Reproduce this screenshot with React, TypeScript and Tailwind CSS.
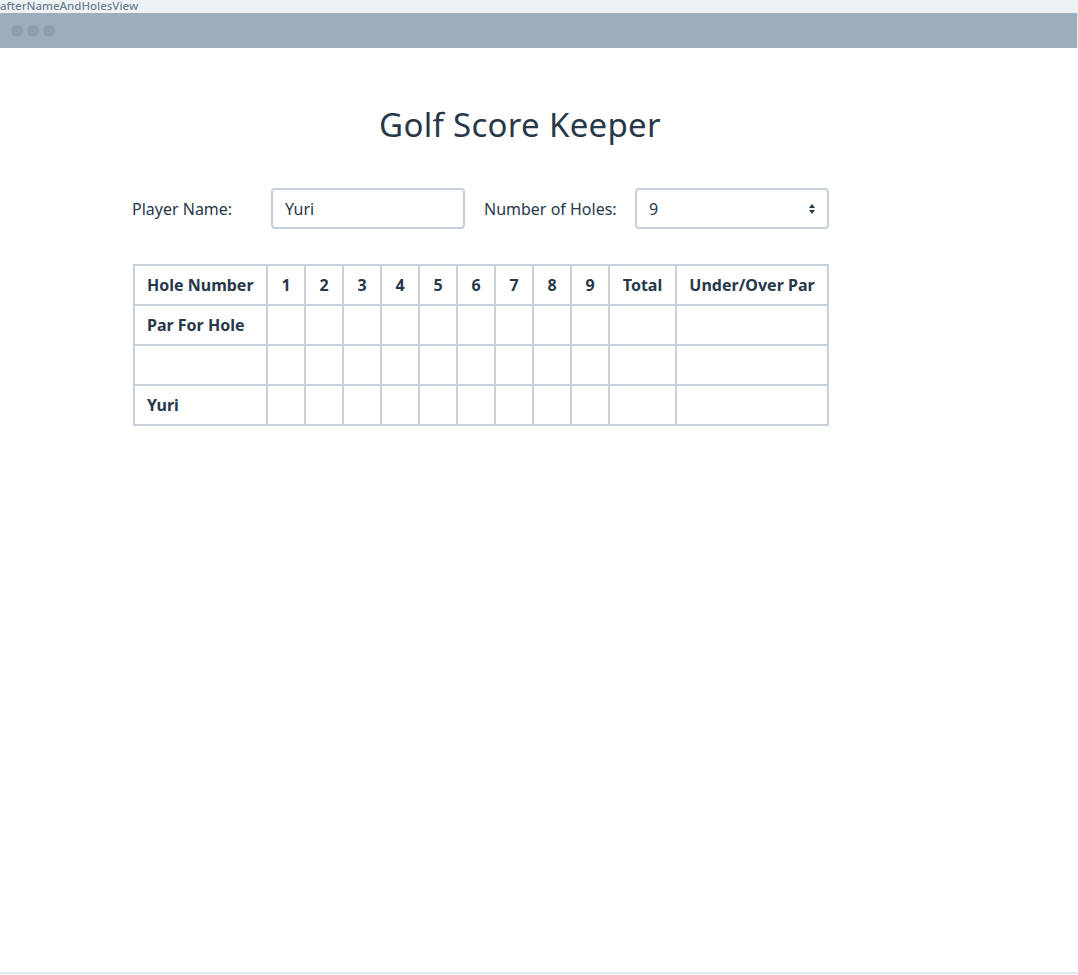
import React from "react";

const holes = [1, 2, 3, 4, 5, 6, 7, 8, 9];

export default function App() {
  const cell = "border-2 border-[#c6d1db] h-[40px] p-0";
  return (
    <div className="w-[1078px] h-[975px] bg-white text-[#27384a] font-['Noto_Sans',sans-serif] flex flex-col overflow-hidden">
      <div className="h-[13px] bg-[#eef2f5] text-[11.5px] leading-[12px] font-medium text-[#6f8092] whitespace-nowrap">
        afterNameAndHolesView
      </div>
      <div className="h-[35px] bg-[#9eadba] flex items-center gap-[4px] pl-[11px] border-r border-[#dfe6ec]">
        <span className="w-[12px] h-[12px] rounded-full bg-[#8e9eac]" />
        <span className="w-[12px] h-[12px] rounded-full bg-[#8e9eac]" />
        <span className="w-[12px] h-[12px] rounded-full bg-[#8e9eac]" />
      </div>
      <div className="flex-1 border-b-2 border-[#e2e8ee] mb-[1px]">
        <div className="w-[1040px] pt-[55px]">
          <h1 className="text-center text-[33px] leading-[44px] font-normal tracking-[0.3px]">
            Golf Score Keeper
          </h1>
        </div>
        <div className="pl-[132px] pt-[41px]">
          <div className="flex items-center text-[16px]">
            <label className="w-[139px]">Player Name:</label>
            <div className="w-[194px] h-[41px] border-2 border-[#c6d1db] rounded-[4px] flex items-center pl-[12px]">
              Yuri
            </div>
            <label className="ml-[19px] w-[151px]">Number of Holes:</label>
            <div className="w-[194px] h-[41px] border-2 border-[#c6d1db] rounded-[4px] flex items-center justify-between pl-[12px] pr-[11px]">
              <span>9</span>
              <svg width="8" height="12" viewBox="0 0 8 12" fill="#27384a">
                <path d="M4 1 L7 5 H1 Z" />
                <path d="M4 11 L7 7 H1 Z" />
              </svg>
            </div>
          </div>
          <table className="mt-[35px] ml-[1px] border-collapse text-[16px] font-bold">
            <tbody>
              <tr>
                <td className={`${cell} w-[133px] pl-[12px]`}>Hole Number</td>
                {holes.map((h) => (
                  <td key={h} className={`${cell} w-[38px] text-center`}>
                    {h}
                  </td>
                ))}
                <td className={`${cell} w-[67px] text-center`}>Total</td>
                <td className={`${cell} w-[152px] text-center`}>Under/Over Par</td>
              </tr>
              <tr>
                <td className={`${cell} pl-[12px]`}>Par For Hole</td>
                {holes.map((h) => (
                  <td key={h} className={cell} />
                ))}
                <td className={cell} />
                <td className={cell} />
              </tr>
              <tr>
                <td className={cell} />
                {holes.map((h) => (
                  <td key={h} className={cell} />
                ))}
                <td className={cell} />
                <td className={cell} />
              </tr>
              <tr>
                <td className={`${cell} pl-[12px]`}>Yuri</td>
                {holes.map((h) => (
                  <td key={h} className={cell} />
                ))}
                <td className={cell} />
                <td className={cell} />
              </tr>
            </tbody>
          </table>
        </div>
      </div>
    </div>
  );
}
